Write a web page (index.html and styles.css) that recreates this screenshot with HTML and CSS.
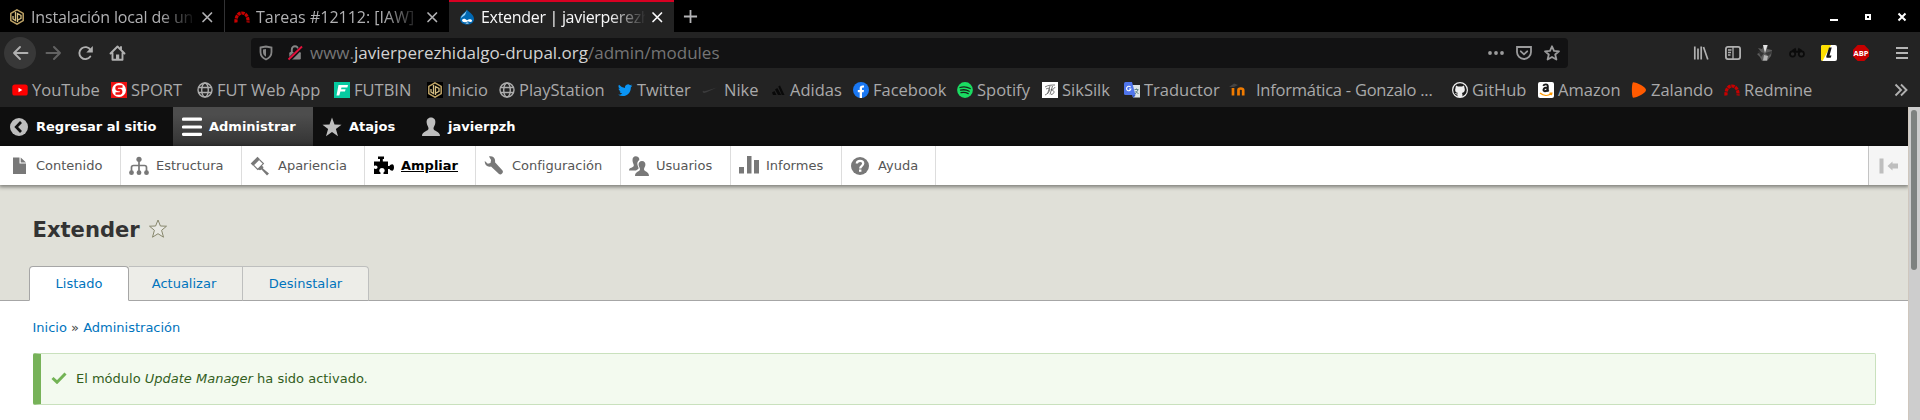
FILE: index.html
```html
<!DOCTYPE html>
<html lang="es">
<head>
<meta charset="utf-8">
<title>Extender | javierperezhidalgo-drupal.org</title>
<link rel="stylesheet" href="styles.css">
</head>
<body>
<svg class="defs" width="0" height="0">
  <symbol id="i-close" viewBox="0 0 16 16"><path d="M4 4l8.500 8.500M12.500 4L4 12.500" stroke="currentColor" stroke-width="1.700" stroke-linecap="round"/></symbol>
  <symbol id="i-hex" viewBox="0 0 16 16"><path d="M8 .8l6.200 3.600v7.200L8 15.200l-6.200-3.600V4.400z" fill="none" stroke="#bda265" stroke-width="1.500"/><path d="M6.500 3v8.500L4 10V7M8.500 13V4.500L12 6.400v3L9 11" fill="none" stroke="#d5bf84" stroke-width="1.300"/></symbol>
  <symbol id="i-redmine" viewBox="0 0 16 16"><path d="M2 13.500C1.500 8 4 4 8 4s6.500 4 6 9.500" fill="none" stroke="#c80000" stroke-width="3.200" stroke-dasharray="3.300 .7"/></symbol>
  <symbol id="i-globe" viewBox="0 0 16 16"><g fill="none" stroke="#adadad" stroke-width="1.400"><circle cx="8" cy="8" r="7"/><ellipse cx="8" cy="8" rx="3.300" ry="7"/><path d="M1.500 5.500h13M1.500 10.500h13"/></g></symbol>
</svg>
<div class="tabstrip">
  <div class="tab"><svg class="fav"><use href="#i-hex"/></svg><span class="label t1">Instalación local de un</span><svg class="close"><use href="#i-close"/></svg></div>
  <div class="tab"><svg class="fav"><use href="#i-redmine"/></svg><span class="label t2">Tareas #12112: [IAW]</span><svg class="close"><use href="#i-close"/></svg></div>
  <div class="tab active"><svg class="fav" viewBox="0 0 16 16"><path d="M8 .5C9 3 15 5 15 10c0 3.500-3 5.500-7 5.500S1 13 1 10c0-4 5-6 7-9.500z" fill="#0068b3"/><path d="M8 1C7 4 2 6 2 9l4-3z" fill="#9fd5f5"/><path d="M3 11c1.500-2 3.500-1 5 .3C9.500 10 12.500 9.500 13 11.500s-2.500 1.500-4 .8c-2 1.200-6 1.500-6-1.300zM6.300 14c1.500-.8 2.500-.8 3.700 0-1 .8-2.700.8-3.700 0z" fill="#fff"/></svg><span class="label t3">Extender | javierperezh</span><svg class="close"><use href="#i-close"/></svg></div>
  <svg class="plus" viewBox="0 0 16 16"><path d="M8 1v14M1 8h14" stroke="#b5b5b8" stroke-width="1.900"/></svg>
  <svg class="winctl" viewBox="0 0 78 12"><path d="M0 9h8v2H0z" fill="#fff"/><path d="M36 5h4v4h-4z" fill="none" stroke="#fff" stroke-width="2"/><path d="M68.500 3.500l7 7M75.500 3.500l-7 7" stroke="#fff" stroke-width="2"/></svg>
</div>
<div class="navbar">
  <span class="back"><svg viewBox="0 0 16 16"><path d="M15 8H1.500M7.500 2L1.500 8l6 6" class="ln"/></svg></span>
  <svg class="nav fwd" viewBox="0 0 16 16"><path d="M1 8h13.500M8.500 2l6 6-6 6" class="ln"/></svg>
  <svg class="nav reload" viewBox="0 0 16 16"><path d="M12.800 11.500A6 6 0 1 1 13 5" class="ln"/><path d="M15.300 1v6.500H8.800z" fill="#b0b0b0"/></svg>
  <svg class="nav home" viewBox="0 0 16 16"><path d="M1 8.500L8 1.500l7 7M3 8v6.800h10V8M11.500 2v3" class="ln"/><path d="M6.500 9.500h3.200v5H6.500z" fill="#b0b0b0"/></svg>
  <div class="urlbar">
    <svg class="shield" viewBox="0 0 14 16"><path d="M1.500 2.500L7 1.500l5.500 1V7c0 4-2 6-5.500 7.500C3.500 13 1.500 11 1.500 7z" fill="none" stroke="#858585" stroke-width="1.800"/><path d="M7 4l-3 .5V7c0 2 1 3.500 3 4.700z" fill="#858585"/></svg>
    <svg class="lock" viewBox="0 0 16 16"><path d="M4.800 7V4.500a3.200 3.200 0 0 1 6.400 0V7" fill="none" stroke="#858585" stroke-width="1.900"/><rect x="2.300" y="7" width="11.500" height="7.500" rx="1.200" fill="#858585"/><path d="M1.500 15.500L15 2" stroke="#121213" stroke-width="4"/><path d="M1.500 14.500L15 1.500" stroke="#e3113c" stroke-width="1.900"/></svg>
    <span class="url">www.<b>javierperezhidalgo-drupal.org</b>/admin/modules</span>
    <svg class="dots" viewBox="0 0 16 16"><circle cx="2" cy="8" r="1.900"/><circle cx="8" cy="8" r="1.900"/><circle cx="14" cy="8" r="1.900"/></svg>
    <svg class="pocket" viewBox="0 0 16 16"><path d="M1 2h14v5a7 7 0 0 1-14 0z"/><path d="M4.800 6.300L8 9.300l3.200-3" stroke-linecap="round"/></svg>
    <svg class="bstar" viewBox="0 0 16 16"><path d="M8 1.300l2 4.600 5 .4-3.800 3.200 1.200 5L8 11.900l-4.400 2.600 1.200-5L1 6.300l5-.4z" stroke-linejoin="round"/></svg>
  </div>
  <div class="tools">
    <svg viewBox="0 0 16 16"><path d="M1.800 1.500v13M5 3.500v11M8.200 1.500v13M10.500 2l4.300 12.500" stroke="#b0b0b0" stroke-width="1.700"/></svg>
    <svg viewBox="0 0 16 16"><rect x=".9" y="1.900" width="14.200" height="12.200" rx="2" fill="none" stroke="#b0b0b0" stroke-width="1.800"/><path d="M8 2v12M3 5h3.500M3 7.500h3M3 10h2.500" stroke="#b0b0b0" stroke-width="1.300"/></svg>
    <svg viewBox="0 0 16 16"><path d="M1 3l4 1 2-4h4l-1 4 5 1-1 6-4 5H5l-2-4-3-3 4-2z" fill="#5c5c5c"/><path d="M6 0h4.500L8 8z" fill="#e4e4e4"/><path d="M8 8l7-2a7 7 0 0 1-4 5z" fill="#393939"/><path d="M1 6l6 2-3 4z" fill="#333"/><path d="M7 10l4 1-1 4.500H6z" fill="#b4b4b4"/></svg>
    <svg viewBox="0 0 16 16"><g fill="#2a2a2a" stroke="#0b0b0b" stroke-width="1.700"><circle cx="3.600" cy="9" r="2.600"/><circle cx="12.400" cy="9" r="2.600"/><path d="M3 6l3-2 1 3h2l1-3 3 2" fill="#0b0b0b"/></g></svg>
    <svg viewBox="0 0 16 16"><rect width="16" height="16" rx="2" fill="#fff"/><path d="M2 0h8L1.500 16H2a2 2 0 0 1-2-2V2a2 2 0 0 1 2-2z" fill="#ffe000"/><path d="M8 2.500h2.700L8.500 10.500h2l-.8 2.300H6c-1 0-.8-1-.5-2z" fill="#151515"/></svg>
    <svg viewBox="0 0 16 16"><path d="M4.700 0h6.600L16 4.700v6.600L11.300 16H4.700L0 11.300V4.700z" fill="#c70000"/><text x="8" y="10.800" text-anchor="middle" class="abp">ABP</text></svg>
  </div>
  <svg class="burger" viewBox="0 0 12 14"><path d="M0 2h12M0 7h12M0 12h12" stroke="#b5b5b5" stroke-width="1.900"/></svg>
</div>
<div class="bookmarks">
  <div class="bm w99"><svg viewBox="0 0 16 16"><rect x=".3" y="2.500" width="15.400" height="11" rx="2.600" fill="#f00"/><path d="M6.500 5.800v4.400L10.300 8z" fill="#fff"/></svg><span>YouTube</span></div>
  <div class="bm w86"><svg viewBox="0 0 16 16"><path d="M0 0h16v16H0z" fill="#e11"/><circle cx="8" cy="8" r="7" fill="#fff"/><path d="M11.500 4.500H7.300C5 4.500 5 7.700 7.200 8h1.500c2 .3 2 3.500-.3 3.500H4.500" fill="none" stroke="#e11" stroke-width="2.500"/></svg><span>SPORT</span></div>
  <div class="bm w137"><svg><use href="#i-globe"/></svg><span>FUT Web App</span></div>
  <div class="bm w93"><svg viewBox="0 0 16 16"><path d="M0 0h16v16H0z" fill="#06c9a0"/><path d="M4.500 3H14l-.6 2.500H7.500L7 7.300h4.600l-.6 2.300H6.400L5.300 13.500H2.500z" fill="#fff"/></svg><span>FUTBIN</span></div>
  <div class="bm w72"><svg class="blk"><use href="#i-hex"/></svg><span>Inicio</span></div>
  <div class="bm w118"><svg><use href="#i-globe"/></svg><span>PlayStation</span></div>
  <div class="bm w85"><svg viewBox="0 0 24 24"><path d="M23 5.500c-.8.400-1.600.6-2.500.7.900-.5 1.600-1.400 1.900-2.400-.8.500-1.800.9-2.800 1.100a4.400 4.400 0 0 0-7.500 4A12.500 12.500 0 0 1 3 4.300a4.400 4.400 0 0 0 1.400 5.900c-.7 0-1.400-.2-2-.5 0 2.100 1.500 3.900 3.500 4.300-.6.200-1.300.2-2 .1.600 1.700 2.200 3 4.100 3A8.800 8.800 0 0 1 1.500 19c9.500 5.500 19.500-1 19.300-11.200.9-.6 1.600-1.400 2.200-2.300z" fill="#0a95f5"/></svg><span>Twitter</span></div>
  <div class="bm w68 gap6"><svg viewBox="0 0 16 16"><path d="M1 8.500C0 10.500 1.500 11.500 4 10.500L15 5.500 4.500 8.800C2.500 9.500 1.500 9.500 1 8.500z" fill="#3c3c3d"/></svg><span>Nike</span></div>
  <div class="bm w83"><svg viewBox="0 0 16 16"><path d="M2 10.500l2.500-1.500 2 4H3zM5 7.500L7.300 6l4 7H8zM8.300 4.500L10 3.500 14.500 13h-2.700z" fill="#090909"/></svg><span>Adidas</span></div>
  <div class="bm w104"><svg viewBox="0 0 16 16"><circle cx="8" cy="8" r="8" fill="#1977f3"/><path d="M6.700 16v-5.700H4.800V8h1.900V6.300C6.700 4 8 3.200 11 3.500v2C9.500 5.400 9 5.700 9 6.600V8h2l-.4 2.300H9V16z" fill="#fff"/></svg><span>Facebook</span></div>
  <div class="bm w85"><svg viewBox="0 0 16 16"><circle cx="8" cy="8" r="7.900" fill="#1bdc62"/><path d="M3 5.500c3.500-1 7-.7 10.200 1M3.500 8.200c3-.8 6-.5 8.700 1M4 10.700c2.500-.6 5-.3 7.200.9" stroke="#162219" stroke-width="1.300" fill="none" stroke-linecap="round"/></svg><span>Spotify</span></div>
  <div class="bm w82"><svg viewBox="0 0 16 16"><path d="M0 0h16v16H0z" fill="#fff"/><path d="M3 5c3-2 7-2 10-2M8 4L5.500 12M4 7c6-3 4 4-1 6M10.500 4L8 12.500M13 5c-1 3-4 2-4 3 4 0 4 4 0 4.500" stroke="#555" fill="none" stroke-width=".8"/></svg><span>SikSilk</span></div>
  <div class="bm w105"><svg viewBox="0 0 16 16"><path d="M6 3h10v12.500H9z" fill="#dce3e5"/><path d="M0 1.500Q0 0 1.500 0H8l3.500 13h-10Q0 13 0 11.500z" fill="#4f75ec"/><path d="M8 13h3.500L9.500 16z" fill="#3158cb"/><path d="M6.600 5.300A2.200 2.200 0 1 0 6.900 7H5" stroke="#fff" fill="none" stroke-width="1.100"/><path d="M10.500 7.500h4M12.500 6.500v1M14 8l-3 4M11.500 9l3 3" stroke="#5e8589" fill="none"/></svg><span>Traductor</span></div>
  <div class="bm w223 gap11"><svg viewBox="0 0 16 16"><path d="M0 5l5-3.500L9 3 5 5z" fill="#444"/><path d="M4 6v7.500M9.500 13.500V8q0-1.500 2.300-1.500T14.200 8v5.500" fill="none" stroke="#f07b00" stroke-width="2.700"/></svg><span>Informática - Gonzalo ...</span></div>
  <div class="bm w86"><svg viewBox="0 0 16 16"><circle cx="8" cy="8" r="7.400" fill="#1c1c1c" stroke="#eee" stroke-width="1.200"/><path d="M4 3.500l2 1h4l2-1 .5 2.500C13.500 9 12 10.600 9.800 11c.7.500.7 1.500.7 4h-5v-2.500c-1.500.2-2-.8-2.500-1.500 1 0 1.300.8 2.500.5 0 0 .2-.4.600-.6C3.500 10.500 2.500 9 3.500 6z" fill="#eee"/></svg><span>GitHub</span></div>
  <div class="bm w93"><svg viewBox="0 0 16 16"><rect width="16" height="16" rx="2" fill="#fff"/><path d="M5.300 3.800C6 2 9.800 1.500 9.800 4.300V8c0 .8.400 1 .8 1.500M9.500 5.500C5 5.500 4.500 9 6.800 9.200 9 9.200 9.700 7.500 9.700 6" fill="none" stroke="#1a1a1a" stroke-width="1.900"/><path d="M2 11c3.500 3 8 3 11 .8M11.500 11.200h2.300l-.5 2" fill="none" stroke="#f90" stroke-width="1.400"/></svg><span>Amazon</span></div>
  <div class="bm w93"><svg viewBox="0 0 16 16"><path d="M2 .3C6 .3 15 5 15 8S6 15.700 2 15.700C.5 14.500.5 1.500 2 .3z" fill="#ff5a00"/></svg><span>Zalando</span></div>
  <div class="bm"><svg><use href="#i-redmine"/></svg><span>Redmine</span></div>
  <svg class="more" viewBox="0 0 14 14"><path d="M1.500 1.500L7 7l-5.500 5.500M7 1.500L12.500 7 7 12.500" fill="none" stroke="#b0b0b0" stroke-width="1.900"/></svg>
</div>
<div class="viewport">
  <main class="page">
    <nav class="toolbar">
      <a class="tb home-tab"><svg viewBox="0 0 20 20"><circle cx="10" cy="10" r="9" fill="#bebebe"/><path d="M12 5l-4.800 5 4.800 5" fill="none" stroke="#0f0f0f" stroke-width="2.700"/></svg>Regresar al sitio</a>
      <a class="tb on"><svg viewBox="0 0 20 20"><path d="M1.500 2.200h17M1.500 10h17M1.500 17.300h17" stroke="#fff" stroke-width="3.200" stroke-linecap="round"/></svg>Administrar</a>
      <a class="tb short"><svg viewBox="0 0 20 20"><path d="M10 .5l2.500 7 7 .2-5.600 4.400 2.100 7.200-6-4.200-6 4.200 2.100-7.200L.5 7.700l7-.2z" fill="#bebebe"/></svg>Atajos</a>
      <a class="tb"><svg viewBox="0 0 20 20"><path d="M10 .5c3 0 4.800 2.300 4.300 5.500-.3 2.500-1.800 3.500-1.800 5.500 0 3 6.500 2.500 6.500 7.500H1c0-5 6.500-4.500 6.500-7.500 0-2-1.500-3-1.800-5.500C5.200 2.800 7 .5 10 .5z" fill="#bebebe"/></svg>javierpzh</a>
    </nav>
    <nav class="tray">
      <a class="w121"><svg viewBox="0 0 20 20"><path d="M4 1.500h6.500v6H17V18H4zM11.700 1.500L17 6.500h-5.300z"/></svg>Contenido</a>
      <a class="w121"><svg viewBox="0 0 20 20"><circle cx="10" cy="3.300" r="2.600"/><path d="M10 4v13M2.500 17v-5.500Q2.500 9.500 4.500 9.500h11q2 0 2 2V17M7 9.500" fill="none" stroke="#787878" stroke-width="1.700"/><circle cx="2.500" cy="16.700" r="2.400"/><circle cx="10" cy="16.700" r="2.400"/><circle cx="17.500" cy="16.700" r="2.400"/></svg>Estructura</a>
      <a class="w123 wide"><svg viewBox="0 0 20 20"><path d="M.7 7.500L7.500.7 10 3.200 3.200 10z"/><path d="M3.700 9.300l4 4 5.700-5.700-4-4" fill="none" stroke="#787878" stroke-width="1.200"/><path d="M7.500 13.300l4-3.800 2 1.500-.5 1.500 6 5-2 2-5.500-6-1.500.8z"/></svg>Apariencia</a>
      <a class="w111 cur"><svg viewBox="0 0 20 20"><path d="M4 .5h6V3H8.800v2.500H14V10h1.500c.5-1 1.500-1.700 2.700-1.700 1 0 1.800 1.200 1.800 3.200s-.8 3.200-1.800 3.200c-1.200 0-2.200-.7-2.700-1.700H14v5H9.500v-1.500c2-1 1.500-4.500-1.500-4.500s-3.500 3.500-1.500 4.500V18H0v-5.500c2 1 3.500.3 3.500-1.200S2 9 0 10V5.500h6V3H4z"/></svg><b>Ampliar</b></a>
      <a class="w145 wide"><svg viewBox="0 0 20 20"><path d="M5 .5c4-.8 6.800 2 6 5.700l7.500 8.300c1.500 2-1.500 5-3.500 3.500L7 10.500C3.500 11.500.5 9 .8 5l3 2.700 2.700-.7.600-3z"/></svg>Configuración</a>
      <a class="w110"><svg viewBox="0 0 20 20"><path d="M6.500.3C9 .3 10.500 1.500 10.300 4c-1.800 1-2.300 3-1.800 5 .4 1.700 1.300 2.300 1 3.700L7 14.500H0c0-3.500 4.800-2.500 4.800-5C4.800 8 3.500 6.500 3.500 4S5 .3 6.500.3z"/><path d="M13 5c2.300 0 3.700 1.700 3.400 4-.2 2-1.400 2.700-1.400 4.300C15 16 20 15.300 20 20H6c0-4.700 5-4 5-6.700C11 11.700 9.800 11 9.600 9 9.300 6.700 10.700 5 13 5z"/></svg>Usuarios</a>
      <a class="w111"><svg viewBox="0 0 20 20"><path d="M0 11h5v6.500H0zM8 0h4.500v17.500H8zM15 4h5v13.500h-5z"/></svg>Informes</a>
      <a class="w94 wide"><svg viewBox="0 0 20 20"><circle cx="10" cy="10" r="9"/><path d="M6.800 7.500C7 4 13.200 4 13.200 7.500c0 2.300-3 2.300-3 5" fill="none" stroke="#fff" stroke-width="2.300"/><path d="M9 13.500h2.400v2.300H9z" fill="#fff"/></svg>Ayuda</a>
      <span class="toggle"><svg viewBox="0 0 20 16"><path d="M.5.500h4v15h-4zM8.500 8l5-4.500V5.500H19v5h-5.500v2z" fill="#bebebe"/></svg></span>
    </nav>
    <header class="head">
      <h1>Extender <svg viewBox="0 0 20 20"><path d="M10 1l2.400 6 6.100.2-4.900 4.100 1.900 6.900-5.500-3.500-5.500 3.500 1.900-6.900L1.500 7.200 7.600 7z" fill="#e8e8e2" stroke="#87876c" stroke-width="1"/></svg></h1>
      <div class="tabs"><a class="sel">Listado</a><a class="mid">Actualizar</a><a class="last">Desinstalar</a></div>
    </header>
    <div class="crumb"><a>Inicio</a> » <a>Administración</a></div>
    <div class="msg"><svg viewBox="0 0 16 12"><path d="M1.500 6L6 10.200 14.500 1.500" fill="none" stroke="#73b355" stroke-width="3"/></svg><span>El módulo <em>Update Manager</em> ha sido activado.</span></div>
  </main>
  <div class="scroll"><i></i></div>
</div>
</body>
</html>
```
FILE: styles.css
```css
* { box-sizing: border-box; }
body { margin: 0; width: 1920px; height: 420px; overflow: hidden; background: #fff; font-family: "Open Sans", "Noto Sans", sans-serif; }
svg { flex: none; display: block; }
.defs { position: absolute; }

/* Browser chrome */
.tabstrip { display: flex; height: 32px; background: #000; color: #b1b1b3; }
.tab { display: flex; align-items: center; width: 225px; padding: 2px 0 0 9px; border-right: 1px solid #323234; }
.tab:nth-child(2) { width: 224px; border-right-color: #000; }
.tab.active { background: #232323; color: #f9f9fa; border: 0; border-top: 2px solid #d70022; padding-top: 0; padding-left: 10px; }
.fav { width: 16px; height: 16px; }
.label { width: 164px; margin-left: 6px; white-space: nowrap; font-size: 16px; line-height: 26px; -webkit-mask-image: linear-gradient(90deg, #000 78%, transparent 101%); mask-image: linear-gradient(90deg, #000 78%, transparent 101%); }
.t1 { letter-spacing: -.15px; }
.t3 { letter-spacing: -.3px; }
.close { width: 16px; height: 16px; margin-left: 4px; }
.plus { width: 15px; height: 15px; margin: 9px 0 0 9px; }
.winctl { width: 78px; height: 12px; margin: 10px 12px 0 auto; }

.navbar { display: flex; align-items: center; height: 42px; padding-left: 4px; background: #232323; }
.ln { fill: none; stroke: #b0b0b0; stroke-width: 1.9; stroke-linecap: round; stroke-linejoin: round; }
.back { display: flex; align-items: center; justify-content: center; width: 32px; height: 32px; border-radius: 50%; background: #383838; }
.back svg, .nav { width: 17px; height: 16px; }
.nav.fwd { margin-left: 9px; opacity: .45; }
.nav.reload { margin-left: 15px; }
.nav.home { margin-left: 15px; }
.urlbar { display: flex; align-items: center; width: 1317px; height: 30px; margin-left: 125px; padding-left: 8px; border-radius: 4px; background: #121213; }
.shield { width: 14px; height: 16px; }
.lock { width: 16px; height: 16px; margin-left: 14px; }
.url { width: 1173px; margin-left: 7px; font-size: 17px; line-height: 26px; color: #757576; white-space: nowrap; }
.url b { font-weight: 400; color: #d2d2d3; }
.dots, .pocket, .bstar { width: 16px; height: 16px; }
.dots { fill: #9b9b9c; margin-left: 5px; }
.pocket, .bstar { fill: none; stroke: #9b9b9c; stroke-width: 1.8; margin-left: 12px; }
.tools { display: flex; gap: 16px; margin-left: 125px; }
.tools svg { width: 16px; height: 16px; }
.abp { font: bold 7.500px "Open Sans", sans-serif; fill: #fff; }
.burger { width: 12px; height: 14px; margin-left: 27px; }

.bookmarks { display: flex; align-items: center; height: 33px; padding: 0 0 1px 12px; background: #232323; color: #a9a9aa; font-size: 16.500px; }
.bm { display: flex; align-items: center; gap: 4px; white-space: nowrap; line-height: 26px; }
.bm svg { width: 16px; height: 16px; }
.blk { background: #000; }
.gap6 { gap: 6px; }
.gap11 { gap: 11px; letter-spacing: -.25px; }
.w99 { width: 99px; } .w86 { width: 86px; } .w137 { width: 137px; } .w93 { width: 93px; }
.w72 { width: 72px; } .w118 { width: 118px; } .w85 { width: 85px; } .w68 { width: 68px; }
.w83 { width: 83px; } .w104 { width: 104px; } .w82 { width: 82px; } .w105 { width: 105px; } .w223 { width: 223px; }
.more { width: 14px; height: 14px; margin: 0 12px 0 auto; }

/* Page */
.viewport { display: flex; height: 313px; font: 13px "DejaVu Sans", sans-serif; }
.page { width: 1908px; overflow: hidden; }
.toolbar { display: flex; height: 39px; background: #0f0f0f; color: #fff; font-weight: bold; }
.tb { display: flex; align-items: center; gap: 7px; padding-left: 9px; width: 99px; white-space: nowrap; }
.tb svg, .tray a svg { width: 20px; height: 20px; }
.tb.home-tab { width: 173px; }
.tb.on { width: 140px; background: linear-gradient(#4d4d4d 20%, #333); }
.tray { position: relative; display: flex; height: 39px; background: #fff; color: #565656; box-shadow: 0 1px 4px 1px rgba(0,0,0,.45); }
.tray a { display: flex; align-items: center; gap: 7px; padding-left: 8px; border-right: 1px solid #ddd; fill: #787878; white-space: nowrap; }
.tray a:first-child { padding-left: 9px; }
.tray a.wide { gap: 8px; }
.tray a.cur { padding-left: 9px; color: #000; fill: #000; text-decoration: underline; }
.w121 { width: 121px; } .w123 { width: 123px; } .w111 { width: 111px; } .w145 { width: 145px; } .w110 { width: 110px; } .w94 { width: 94px; }
.toggle { display: flex; align-items: center; width: 40px; margin-left: auto; padding-left: 10px; background: #f5f5f5; border-left: 1px solid #c4c4c4; }
.toggle svg { width: 20px; height: 16px; }
.head { height: 116px; padding: 30px 29px 0; background: #e0e0d8; border-bottom: 1px solid #a6a6a6; }
h1 { display: flex; align-items: center; gap: 8px; height: 28px; margin: 0 0 23px 3.500px; font-size: 21.100px; color: #333; }
h1 svg { width: 20px; height: 20px; }
.tabs { display: flex; height: 35px; color: #0074bd; }
.tabs a { display: flex; align-items: center; justify-content: center; background: #edede8; border: 1px solid #bebfbe; border-left: 0; border-bottom-color: #a6a6a6; }
.tabs a.sel { width: 100px; background: #fff; border: 1px solid #a6a6a6; border-bottom-color: #fff; border-radius: 4px 4px 0 0; }
.tabs .mid { width: 114px; padding-right: 3px; }
.tabs .last { width: 126px; border-radius: 0 4px 0 0; }
.crumb { height: 52px; padding: 19px 32.500px 0; color: #444; }
.crumb a { color: #0074bd; }
.msg { display: flex; align-items: center; gap: 9px; width: 1843px; height: 52px; margin-left: 33px; padding: 0 0 2px 10px; border: 1px solid #c9e1bd; border-left: 8px solid #77b259; border-radius: 2px; background: #f3faef; color: #325e1c; }
.msg svg { width: 16px; height: 12px; }
.scroll { width: 12px; padding: 3px 0 0 2px; background: #cdcdcd; border-left: 1px solid #cfc7be; }
.scroll i { display: block; width: 6px; height: 160px; border-radius: 3px; background: #7e8280; }
```
